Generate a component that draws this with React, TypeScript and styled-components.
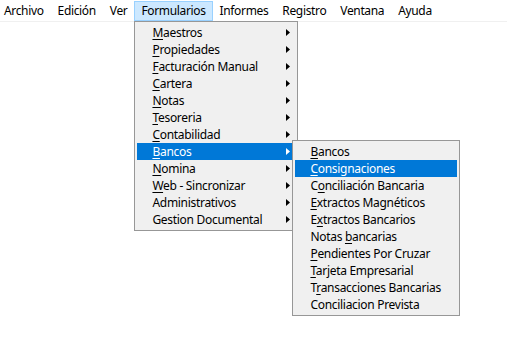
import React from "react";
import styled, { createGlobalStyle } from "styled-components";

const Global = createGlobalStyle`
  html, body { margin: 0; padding: 0; background: #ffffff; }
  body {
    font-family: "Noto Sans", "Open Sans", sans-serif;
    font-size: 12px;
    letter-spacing: -0.3px;
    color: #000;
  }
  #root { width: 507px; height: 358px; position: relative; overflow: hidden; }
`;

const Bar = styled.div`
  display: flex;
  align-items: stretch;
  height: 20px;
  padding: 1px 0 0 1px;
  border-bottom: 1px solid #f0f0f0;
  background: #ffffff;
`;

const BarItem = styled.div<{ $open?: boolean }>`
  position: relative;
  display: flex;
  align-items: center;
  padding: 0 6px;
  border: 1px solid ${(p) => (p.$open ? "#99d1ff" : "transparent")};
  background: ${(p) => (p.$open ? "#cce8ff" : "transparent")};
  white-space: nowrap;
  line-height: 18px;
  letter-spacing: -0.35px;
  &:first-child {
    padding-left: 3px;
    border-left-width: 0;
  }
`;

const Menu = styled.div<{ $width: number }>`
  position: absolute;
  width: ${(p) => p.$width}px;
  box-sizing: border-box;
  background: #f0f0f0;
  border: 1px solid #979797;
  padding: 2px;
  display: flex;
  flex-direction: column;
  z-index: 2;
  letter-spacing: -0.3px;
`;

const DropMenu = styled(Menu)`
  left: -1px;
  top: 100%;
  margin-top: 1px;
`;

const SubMenu = styled(Menu)`
  left: calc(100% - 3px);
  top: -3px;
`;

const Item = styled.div<{ $active?: boolean }>`
  position: relative;
  display: flex;
  align-items: center;
  height: 17px;
  padding: 0 5px 0 15px;
  background: ${(p) => (p.$active ? "#0078d7" : "transparent")};
  color: ${(p) => (p.$active ? "#ffffff" : "#000000")};
  white-space: nowrap;
  line-height: 17px;
`;

const Label = styled.span`
  flex: 1;
`;

const Key = styled.span`
  text-decoration: underline;
  text-underline-offset: 2px;
`;

const Arrow = ({ color }: { color: string }) => (
  <svg width="4" height="7" viewBox="0 0 4 7" style={{ display: "block" }}>
    <path d="M0 0 L4 3.5 L0 7 Z" fill={color} />
  </svg>
);

type Entry = { text: string; key?: number };

const Text = ({ e }: { e: Entry }) => {
  if (e.key === undefined) return <>{e.text}</>;
  return (
    <>
      {e.text.slice(0, e.key)}
      <Key>{e.text[e.key]}</Key>
      {e.text.slice(e.key + 1)}
    </>
  );
};

const mainItems: Entry[] = [
  { text: "Maestros", key: 0 },
  { text: "Propiedades", key: 0 },
  { text: "Facturación Manual", key: 0 },
  { text: "Cartera", key: 0 },
  { text: "Notas", key: 0 },
  { text: "Tesoreria", key: 0 },
  { text: "Contabilidad", key: 0 },
  { text: "Bancos", key: 0 },
  { text: "Nomina", key: 0 },
  { text: "Web - Sincronizar", key: 0 },
  { text: "Administrativos" },
  { text: "Gestion Documental" },
];

const subItems: Entry[] = [
  { text: "Bancos", key: 0 },
  { text: "Consignaciones", key: 0 },
  { text: "Conciliación Bancaria", key: 1 },
  { text: "Extractos Magnéticos", key: 0 },
  { text: "Extractos Bancarios", key: 1 },
  { text: "Notas bancarias", key: 6 },
  { text: "Pendientes Por Cruzar", key: 0 },
  { text: "Tarjeta Empresarial", key: 0 },
  { text: "Transacciones Bancarias", key: 1 },
  { text: "Conciliacion Prevista" },
];

const barItems = ["Archivo", "Edición", "Ver", "Formularios", "Informes", "Registro", "Ventana", "Ayuda"];

export default function App() {
  return (
    <>
      <Global />
      <Bar>
        {barItems.map((b) =>
          b === "Formularios" ? (
            <BarItem key={b} $open>
              {b}
              <DropMenu $width={164}>
                {mainItems.map((e) => {
                  const active = e.text === "Bancos";
                  return (
                    <Item key={e.text} $active={active}>
                      <Label>
                        <Text e={e} />
                      </Label>
                      <Arrow color={active ? "#ffffff" : "#000000"} />
                      {active && (
                        <SubMenu $width={168}>
                          {subItems.map((s) => (
                            <Item key={s.text} $active={s.text === "Consignaciones"}>
                              <Label>
                                <Text e={s} />
                              </Label>
                            </Item>
                          ))}
                        </SubMenu>
                      )}
                    </Item>
                  );
                })}
              </DropMenu>
            </BarItem>
          ) : (
            <BarItem key={b}>{b}</BarItem>
          )
        )}
      </Bar>
    </>
  );
}
